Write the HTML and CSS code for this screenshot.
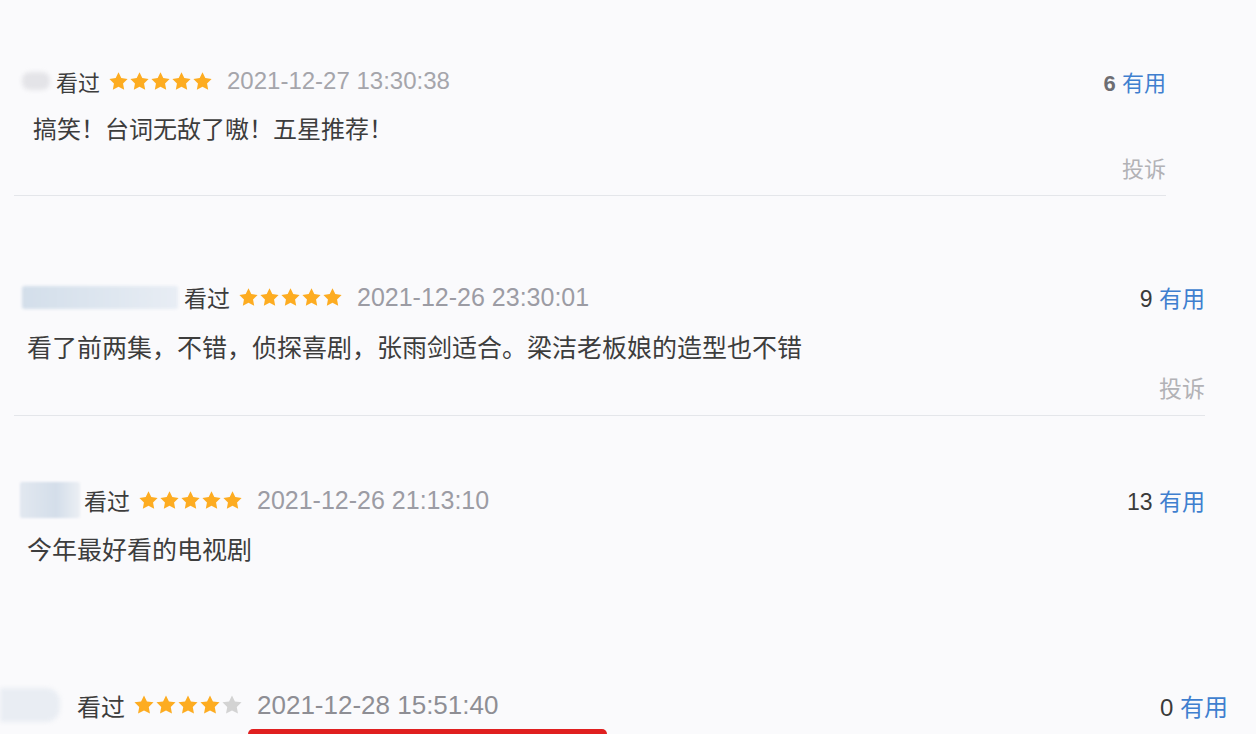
FILE: index.html
```html
<!DOCTYPE html>
<html lang="zh-CN">
<head>
    <meta charset="UTF-8">
    <meta name="viewport" content="width=device-width, initial-scale=1.0">
    <title>短评</title>
    <link rel="stylesheet" href="styles.css">
</head>
<body>
    <svg class="defs" width="0" height="0">
        <symbol id="star" viewBox="0 0 24 24">
            <path d="M12 1.5l3.2 6.6 7.2 1-5.2 5.1 1.3 7.2L12 18l-6.5 3.4 1.3-7.2L1.6 9.1l7.2-1z"/>
        </symbol>
    </svg>

    <div class="comments">
        <div class="review review-a">
            <div class="review-head">
                <div class="review-info">
                    <span class="user user-a"></span>
                    <span class="watched">看过</span>
                    <span class="stars">
                        <svg class="star"><use href="#star"/></svg><svg class="star"><use href="#star"/></svg><svg class="star"><use href="#star"/></svg><svg class="star"><use href="#star"/></svg><svg class="star"><use href="#star"/></svg>
                    </span>
                    <span class="time">2021-12-27 13:30:38</span>
                </div>
                <div class="votes"><span class="count count-light">6</span> <a class="useful">有用</a></div>
            </div>
            <p class="review-text">搞笑！台词无敌了嗷！五星推荐！</p>
            <div class="review-foot"><a class="report">投诉</a></div>
        </div>

        <div class="review review-b">
            <div class="review-head">
                <div class="review-info">
                    <span class="user user-b"></span>
                    <span class="watched">看过</span>
                    <span class="stars">
                        <svg class="star"><use href="#star"/></svg><svg class="star"><use href="#star"/></svg><svg class="star"><use href="#star"/></svg><svg class="star"><use href="#star"/></svg><svg class="star"><use href="#star"/></svg>
                    </span>
                    <span class="time">2021-12-26 23:30:01</span>
                </div>
                <div class="votes"><span class="count">9</span> <a class="useful">有用</a></div>
            </div>
            <p class="review-text">看了前两集，不错，侦探喜剧，张雨剑适合。梁洁老板娘的造型也不错</p>
            <div class="review-foot"><a class="report">投诉</a></div>
        </div>

        <div class="review review-c">
            <div class="review-head">
                <div class="review-info">
                    <span class="user user-c"></span>
                    <span class="watched">看过</span>
                    <span class="stars">
                        <svg class="star"><use href="#star"/></svg><svg class="star"><use href="#star"/></svg><svg class="star"><use href="#star"/></svg><svg class="star"><use href="#star"/></svg><svg class="star"><use href="#star"/></svg>
                    </span>
                    <span class="time">2021-12-26 21:13:10</span>
                </div>
                <div class="votes"><span class="count">13</span> <a class="useful">有用</a></div>
            </div>
            <p class="review-text">今年最好看的电视剧</p>
        </div>

        <div class="review review-d">
            <div class="review-head">
                <div class="review-info">
                    <span class="user user-d"></span>
                    <span class="watched">看过</span>
                    <span class="stars">
                        <svg class="star"><use href="#star"/></svg><svg class="star"><use href="#star"/></svg><svg class="star"><use href="#star"/></svg><svg class="star"><use href="#star"/></svg><svg class="star star-off"><use href="#star"/></svg>
                    </span>
                    <span class="time">2021-12-28 15:51:40</span>
                </div>
                <div class="votes"><span class="count">0</span> <a class="useful">有用</a></div>
            </div>
            <div class="red-bar"></div>
        </div>
    </div>
</body>
</html>
```

FILE: styles.css
```css
body {
    margin: 0;
    background-color: #fafafc;
    color: #3d3d3d;
    font-family: "Liberation Sans", "Noto Sans CJK SC", sans-serif;
    overflow: hidden;
    height: 734px;
}
.defs {
    position: absolute;
}
.comments {
    padding-top: 66px;
}
.review {
    border-bottom: 1px solid #e4e6ea;
}
.review-head {
    display: flex;
    justify-content: space-between;
    align-items: center;
    height: 30px;
}
.review-info {
    display: flex;
    align-items: center;
}
.user {
    display: inline-block;
    border-radius: 8px;
    filter: blur(2px);
}
.watched {
    margin-right: 8px;
}
.stars {
    display: flex;
    margin-right: 14px;
}
.star {
    width: 21px;
    height: 21px;
    fill: #fdac21;
}
.star-off {
    fill: #d3d3d3;
}
.time {
    color: #9c9ca4;
}
.count {
    color: #3a3a3a;
}
.count-light {
    color: #6d6d72;
    font-weight: bold;
}
.useful {
    color: #3f7fcf;
}
.review-text {
    margin: 0;
    height: 30px;
    line-height: 30px;
}
.review-foot {
    display: flex;
    justify-content: flex-end;
    height: 30px;
    line-height: 30px;
}
.report {
    color: #b2b2b6;
}

/* first review */
.review-a {
    margin: 0 90px 0 14px;
    padding: 0 0 10px 8px;
    font-size: 22px;
}
.review-a .review-text {
    margin-top: 19px;
    padding-left: 11px;
    font-size: 24px;
}
.review-a .review-foot {
    margin-top: 10px;
}
.review-a .watched {
    margin-left: 6px;
}
.review-a .time {
    color: #a5a5ab;
    font-size: 24px;
}
.user-a {
    width: 28px;
    height: 18px;
    background: #e4e4e8;
}

/* second review */
.review-b {
    margin: 86px 51px 0 14px;
    padding: 0 0 11px 8px;
    font-size: 23px;
}
.review-b .review-text {
    margin-top: 21px;
    padding-left: 5px;
    font-size: 25px;
}
.review-b .review-foot {
    margin-top: 11px;
}
.review-b .watched {
    margin-left: 6px;
}
.review-b .time {
    font-size: 25px;
}
.user-b {
    width: 156px;
    height: 23px;
    border-radius: 3px;
    background: linear-gradient(90deg, #d3deea, #dfe7f0 60%, #e8edf4);
    filter: blur(1.5px);
}

/* third review */
.review-c {
    margin: 69px 51px 0 0;
    padding: 0 0 116px 20px;
    font-size: 23px;
    border-bottom: none;
}
.review-c .review-text {
    margin-top: 20px;
    padding-left: 7px;
    font-size: 25px;
}
.review-c .watched {
    margin-left: 4px;
}
.review-c .time {
    font-size: 25px;
}
.user-c {
    width: 60px;
    height: 36px;
    border-radius: 2px;
    background: linear-gradient(90deg, #e2e8f0, #d4deea 60%, #eceff4);
    filter: blur(1px);
}

/* fourth review */
.review-d {
    margin: 9px 28px 0 0;
    font-size: 24px;
    border-bottom: none;
}
.review-d .watched {
    margin-left: 17px;
}
.review-d .star {
    width: 22px;
    height: 22px;
}
.review-d .time {
    color: #8e8e94;
    font-size: 26px;
}
.user-d {
    width: 60px;
    height: 34px;
    border-radius: 0 14px 14px 0;
    background: #e9edf3;
}
.red-bar {
    margin: 9px 0 0 248px;
    width: 359px;
    height: 10px;
    background: #e02020;
    border-radius: 5px 5px 0 0;
}
```
